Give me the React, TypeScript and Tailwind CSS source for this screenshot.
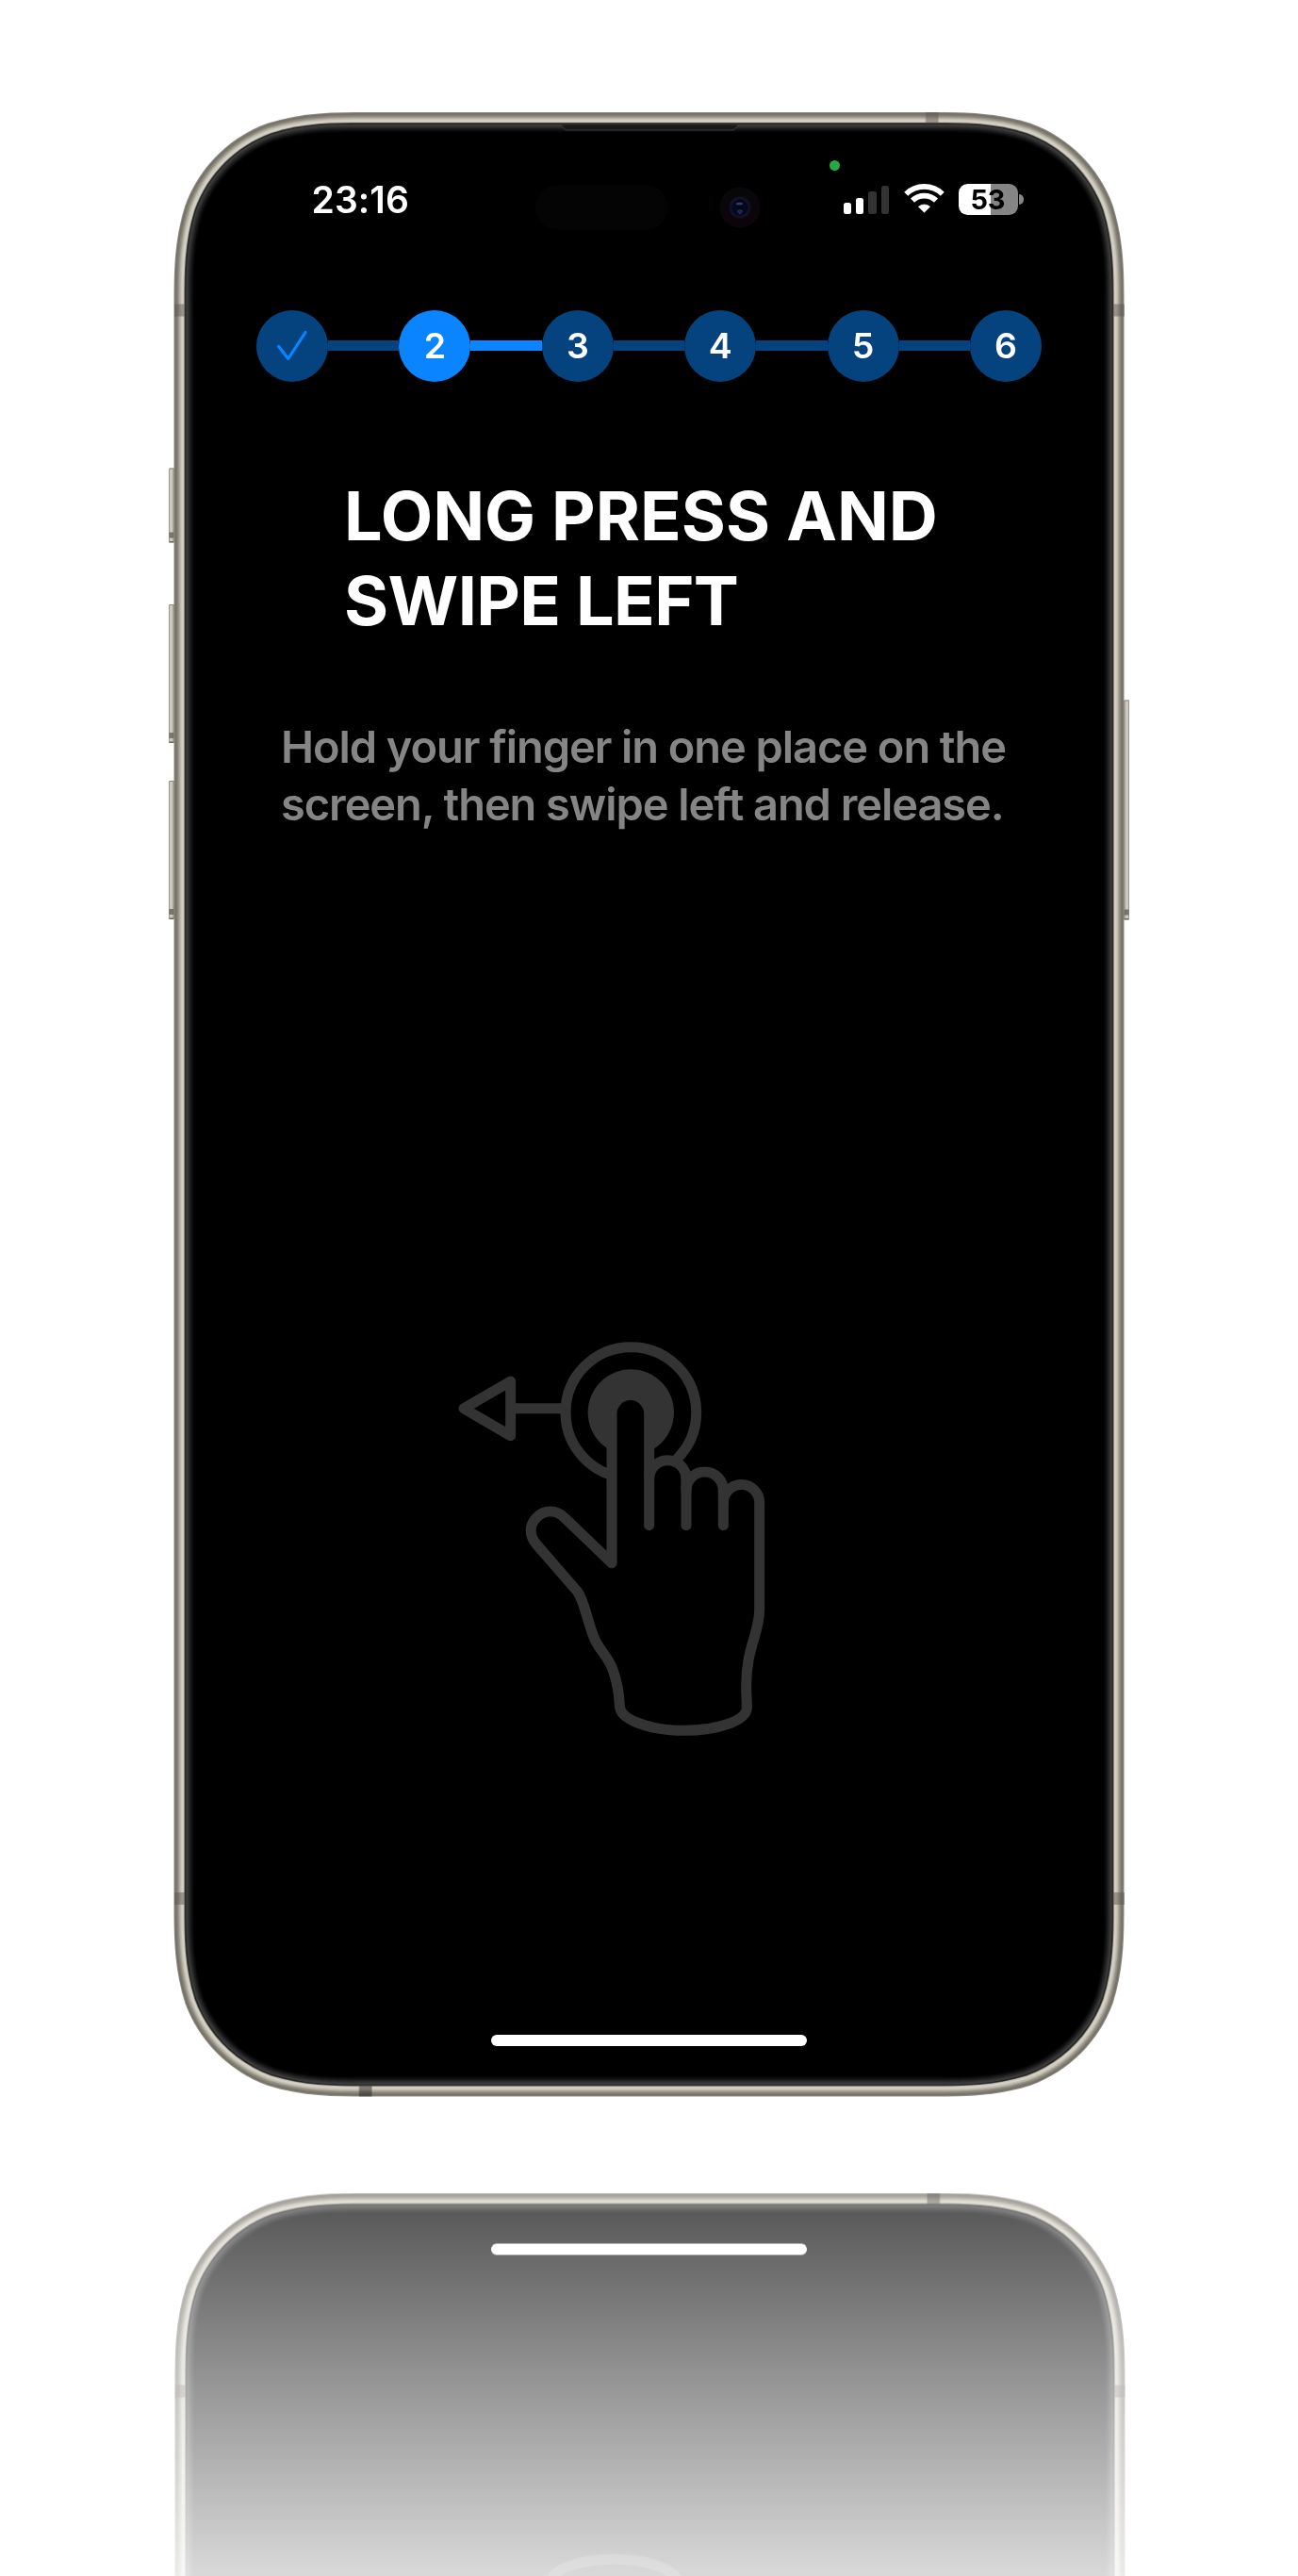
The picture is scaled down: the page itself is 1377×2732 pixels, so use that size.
import React from "react";

const W = 1008;
const H = 2104.5;
const R = 157;

/** Continuous-curvature rounded rectangle, inset from the outer edge of the device. */
function squircle(inset: number) {
  const x0 = inset;
  const y0 = inset;
  const x1 = W - inset;
  const y1 = H - inset;
  const r = R - inset;
  const a = 1.3 * r;
  const b = 1.08849296 * r;
  const c = 0.86840694 * r;
  const d = 0.63149379 * r;
  const e = 0.37282383 * r;
  const f = 0.16905956 * r;
  const g = 0.07491139 * r;
  return [
    `M${x0 + a} ${y0}H${x1 - a}`,
    `C${x1 - b} ${y0} ${x1 - c} ${y0} ${x1 - d} ${y0 + g}`,
    `C${x1 - e} ${y0 + f} ${x1 - f} ${y0 + e} ${x1 - g} ${y0 + d}`,
    `C${x1} ${y0 + c} ${x1} ${y0 + b} ${x1} ${y0 + a}V${y1 - a}`,
    `C${x1} ${y1 - b} ${x1} ${y1 - c} ${x1 - g} ${y1 - d}`,
    `C${x1 - f} ${y1 - e} ${x1 - e} ${y1 - f} ${x1 - d} ${y1 - g}`,
    `C${x1 - c} ${y1} ${x1 - b} ${y1} ${x1 - a} ${y1}H${x0 + a}`,
    `C${x0 + b} ${y1} ${x0 + c} ${y1} ${x0 + d} ${y1 - g}`,
    `C${x0 + e} ${y1 - f} ${x0 + f} ${y1 - e} ${x0 + g} ${y1 - d}`,
    `C${x0} ${y1 - c} ${x0} ${y1 - b} ${x0} ${y1 - a}V${y0 + a}`,
    `C${x0} ${y0 + b} ${x0} ${y0 + c} ${x0 + g} ${y0 + d}`,
    `C${x0 + f} ${y0 + e} ${x0 + e} ${y0 + f} ${x0 + d} ${y0 + g}`,
    `C${x0 + c} ${y0} ${x0 + b} ${y0} ${x0 + a} ${y0}Z`,
  ].join("");
}

const METAL = [
  "#8f8b81", "#76726a", "#78746a", "#848074", "#908c80", "#a19d92",
  "#b6b2a6", "#c4c0b4", "#d2cec2", "#d6d2c6", "#c4bfb4",
];
const GLASS = [
  "#4b4843", "#1e1e1d", "#3c3c3c", "#3a3a3a", "#323232", "#2a2a2a", "#222222",
  "#1a1a1a", "#131313", "#0c0c0c", "#060606", "#020202", "#000000",
];

const BUTTONS = [
  { x: -5.5, y: 377.5, h: 79 },
  { x: -5.5, y: 522, h: 147 },
  { x: -5.5, y: 709, h: 147 },
  { x: W - 0.5, y: 623.5, h: 233 },
];

function Bezel() {
  return (
    <svg className="absolute inset-0 overflow-visible" width={W} height={H} viewBox={`0.5 0 ${W} ${H}`} aria-hidden="true">
      <defs>
        <linearGradient id="btnL" x1="0" x2="1" y1="0" y2="0">
          <stop offset="0" stopColor="#8b867b" />
          <stop offset="0.3" stopColor="#d8d3c8" />
          <stop offset="0.6" stopColor="#c9c4b8" />
          <stop offset="1" stopColor="#858075" />
        </linearGradient>
        <linearGradient id="btnR" x1="1" x2="0" y1="0" y2="0">
          <stop offset="0" stopColor="#8b867b" />
          <stop offset="0.3" stopColor="#d8d3c8" />
          <stop offset="0.6" stopColor="#c9c4b8" />
          <stop offset="1" stopColor="#858075" />
        </linearGradient>
      </defs>
      {BUTTONS.map((b) => (
        <g key={b.y}>
          <rect x={b.x} y={b.y} width={6} height={b.h} rx={1.5} fill={b.x < 0 ? "url(#btnL)" : "url(#btnR)"} />
          <rect x={b.x + 0.5} y={b.y} width={5.5} height={1} fill="#8b867b" />
          <rect x={b.x + 0.5} y={b.y + b.h - 11} width={5} height={6} fill="#5e594f" opacity={0.75} />
          <rect x={b.x + 0.5} y={b.y + b.h - 1.5} width={5} height={1.5} fill="#6b665b" />
        </g>
      ))}
      {METAL.map((c, i) => (
        <path key={i} d={squircle(i)} fill={c} />
      ))}
      <g fill="#5e5755" opacity={0.5}>
        <rect x={0} y={203.5} width={11.5} height={13} />
        <rect x={W - 11.5} y={203.5} width={11.5} height={13} />
        <rect x={0} y={1888} width={11.5} height={13} />
        <rect x={W - 11.5} y={1888} width={11.5} height={13} />
        <rect x={797.5} y={0} width={13.5} height={11.5} />
        <rect x={196.5} y={H - 11.5} width={13.5} height={11.5} fill="#1d1717" opacity={0.9} />
      </g>
      {GLASS.map((c, i) => (
        <path key={i} d={squircle(11 + i * 0.9)} fill={c} />
      ))}
      <path d="M411 13.5L415 19H594L598.5 13.5Z" fill="#191919" />
      <path d="M411 13.5L415 19H594L598.5 13.5" fill="none" stroke="#3a3a3a" strokeWidth={1} />
    </svg>
  );
}

function Camera() {
  return (
    <svg width={44} height={44} viewBox="0 0 44 44" aria-hidden="true">
      <defs>
        <linearGradient id="lens" x1="0" x2="0" y1="0" y2="1">
          <stop offset="0" stopColor="#070709" />
          <stop offset="1" stopColor="#0d040c" />
        </linearGradient>
      </defs>
      <circle cx={22} cy={22} r={21.5} fill="url(#lens)" />
      <circle cx={22} cy={22} r={11.5} fill="#111126" />
      <circle cx={22} cy={22} r={8.5} fill="#060620" />
      <rect x={19} y={14} width={6} height={16} rx={3} fill="#020208" />
      <ellipse cx={21.5} cy={18} rx={3.6} ry={1.6} fill="#343878" />
      <ellipse cx={22} cy={26} rx={3.2} ry={2} fill="#0b3045" />
      <ellipse cx={22} cy={28.3} rx={2.2} ry={1.1} fill="#421052" />
    </svg>
  );
}

function StatusIcons() {
  return (
    <div className="flex items-end">
      <div className="flex h-[30px] items-end gap-[5px]">
        <span className="h-[12.5px] w-[8.3px] rounded-[2.5px] bg-white" />
        <span className="h-[17px] w-[8.3px] rounded-[2.5px] bg-white" />
        <span className="h-[24px] w-[8.3px] rounded-[2.5px] bg-[#333]" />
        <span className="h-[30px] w-[8.3px] rounded-[2.5px] bg-[#333]" />
      </div>
      <svg className="mb-px ml-[15.5px]" width={43} height={31} viewBox="0 0 43 31" aria-hidden="true">
        <g fill="none" stroke="#fff" strokeWidth={5.8}>
          <path d="M2.2 10.8A27.6 27.6 0 0 1 40.8 10.8" />
          <path d="M9 17.7A18 18 0 0 1 34 17.7" />
        </g>
        <path d="M21.5 30.3L15.4 24.3A8.9 8.9 0 0 1 27.6 24.3Z" fill="#fff" stroke="#fff" strokeWidth={0.6} strokeLinejoin="round" />
      </svg>
      <div className="mb-[-1px] ml-[15.5px] flex items-center gap-[1.5px]">
        <div className="flex h-[33px] w-[62.5px] items-center justify-center rounded-[9.5px] bg-[linear-gradient(90deg,#fff_53.5%,#858585_53.5%)] pr-px text-[29px] leading-none font-bold tracking-[-0.3px] text-black">
          53
        </div>
        <span className="h-[11px] w-[4.5px] rounded-r-full bg-[#858585]" />
      </div>
    </div>
  );
}

const STEPS = [1, 2, 3, 4, 5, 6];

function Stepper() {
  return (
    <div className="flex items-center">
      {STEPS.map((n) => (
        <React.Fragment key={n}>
          {n > 1 && <span className={`h-[11px] flex-1 ${n === 3 ? "bg-[#0a84ff]" : "bg-[#05437f]"}`} />}
          <span
            className={`flex size-[76px] shrink-0 items-center justify-center rounded-full text-[37.5px] leading-none font-semibold text-white ${n === 2 ? "bg-[#0a84ff]" : "bg-[#05437f]"}`}
          >
            {n === 1 ? (
              <svg width={76} height={76} viewBox="0 0 76 76" fill="none" aria-label="done">
                <path d="M23.7 38.5L33.8 51.4L52 23.5" stroke="#0a84ff" strokeWidth={3.2} strokeLinecap="round" strokeLinejoin="round" />
              </svg>
            ) : (
              n
            )}
          </span>
        </React.Fragment>
      ))}
    </div>
  );
}

function SwipeHand() {
  return (
    <svg width={380} height={460} viewBox="0 0 1140 1380" aria-hidden="true">
      <g stroke="#333" strokeWidth={33} strokeLinecap="round" strokeLinejoin="round" fill="none">
        <path d="M96 281L245 195V368Z" />
        <path d="M250 281H415" />
        <circle cx={628} cy={294} r={208} />
        <circle cx={628} cy={294} r={137} fill="#333" stroke="none" />
        <path
          fill="#000"
          d="M567 773V298A59.5 59.5 0 0 1 686 298V505A59 59 0 0 1 804 505V542A59 59 0 0 1 922 542V581A57.5 57.5 0 0 1 1037 581V920C1037 1000 994 1040 995 1170L997 1232C997 1276 900 1306 797 1306C690 1306 592 1272 592 1226C590 1180 584 1150 570 1112C558 1076 532 1054 515 1020C492 975 483 900 458 864L326 712C302 682 306 650 327 629C352 603 391 602 418 630Z"
        />
        <path d="M686 490V653M804 505V653M922 542V653" />
      </g>
    </svg>
  );
}

function Phone({ mirrored = false }: { mirrored?: boolean }) {
  return (
    <div className="relative flex h-[2104.5px] w-[1008px] shrink-0 flex-col items-center">
      <Bezel />
      <div className="relative h-[1281px] w-full shrink-0">
        {!mirrored && (
          <div className="flex flex-col">
            <div className="absolute top-[77px] left-[383.5px] h-12 w-[141px] rounded-full bg-[#040404]" />
            <div className="absolute top-[79px] left-[578px]">
              <Camera />
            </div>
            <span className="absolute top-[50.5px] left-[695.5px] size-[11px] rounded-full bg-[#28a745]" />
            <div className="mt-[67px] flex h-[50px] items-center justify-between pr-[107px] pl-[146px]">
              <span className="pt-px text-[39px] leading-[50px] font-semibold tracking-[0.1px] text-white">23:16</span>
              <StatusIcons />
            </div>
            <div className="mx-auto mt-[92.5px] w-[833px]">
              <Stepper />
            </div>
            <h1 className="mt-[97.5px] ml-[180.5px] text-[72px] leading-[90px] font-bold whitespace-nowrap text-white">
              LONG PRESS AND
              <br />
              <span className="tracking-[-0.6px]">SWIPE LEFT</span>
            </h1>
            <p className="mt-[79px] ml-[113.5px] text-[47px] leading-[61px] font-semibold tracking-[-1.06px] whitespace-nowrap text-[#858585]">
              Hold your finger in one place on the
              <br />
              screen, then swipe left and release.
            </p>
          </div>
        )}
      </div>
      <div className="relative ml-[-77px]">
        <SwipeHand />
      </div>
      <div className="relative mt-[298px] h-[11.5px] w-[335px] rounded-full bg-white" />
    </div>
  );
}

export default function App() {
  return (
    <main className="flex h-[2732px] w-[1377px] flex-col items-center overflow-hidden bg-white pt-[119px] font-['Inter',sans-serif]">
      <Phone />
      <div className="relative mt-[102px] flex h-[406.5px] w-full shrink-0 justify-center overflow-hidden" aria-hidden="true">
        <div className="rotate-180 self-start">
          <Phone mirrored />
        </div>
        <div className="absolute inset-0 bg-[linear-gradient(180deg,rgba(255,255,255,0.327),rgba(255,255,255,0.85))]" />
      </div>
    </main>
  );
}
